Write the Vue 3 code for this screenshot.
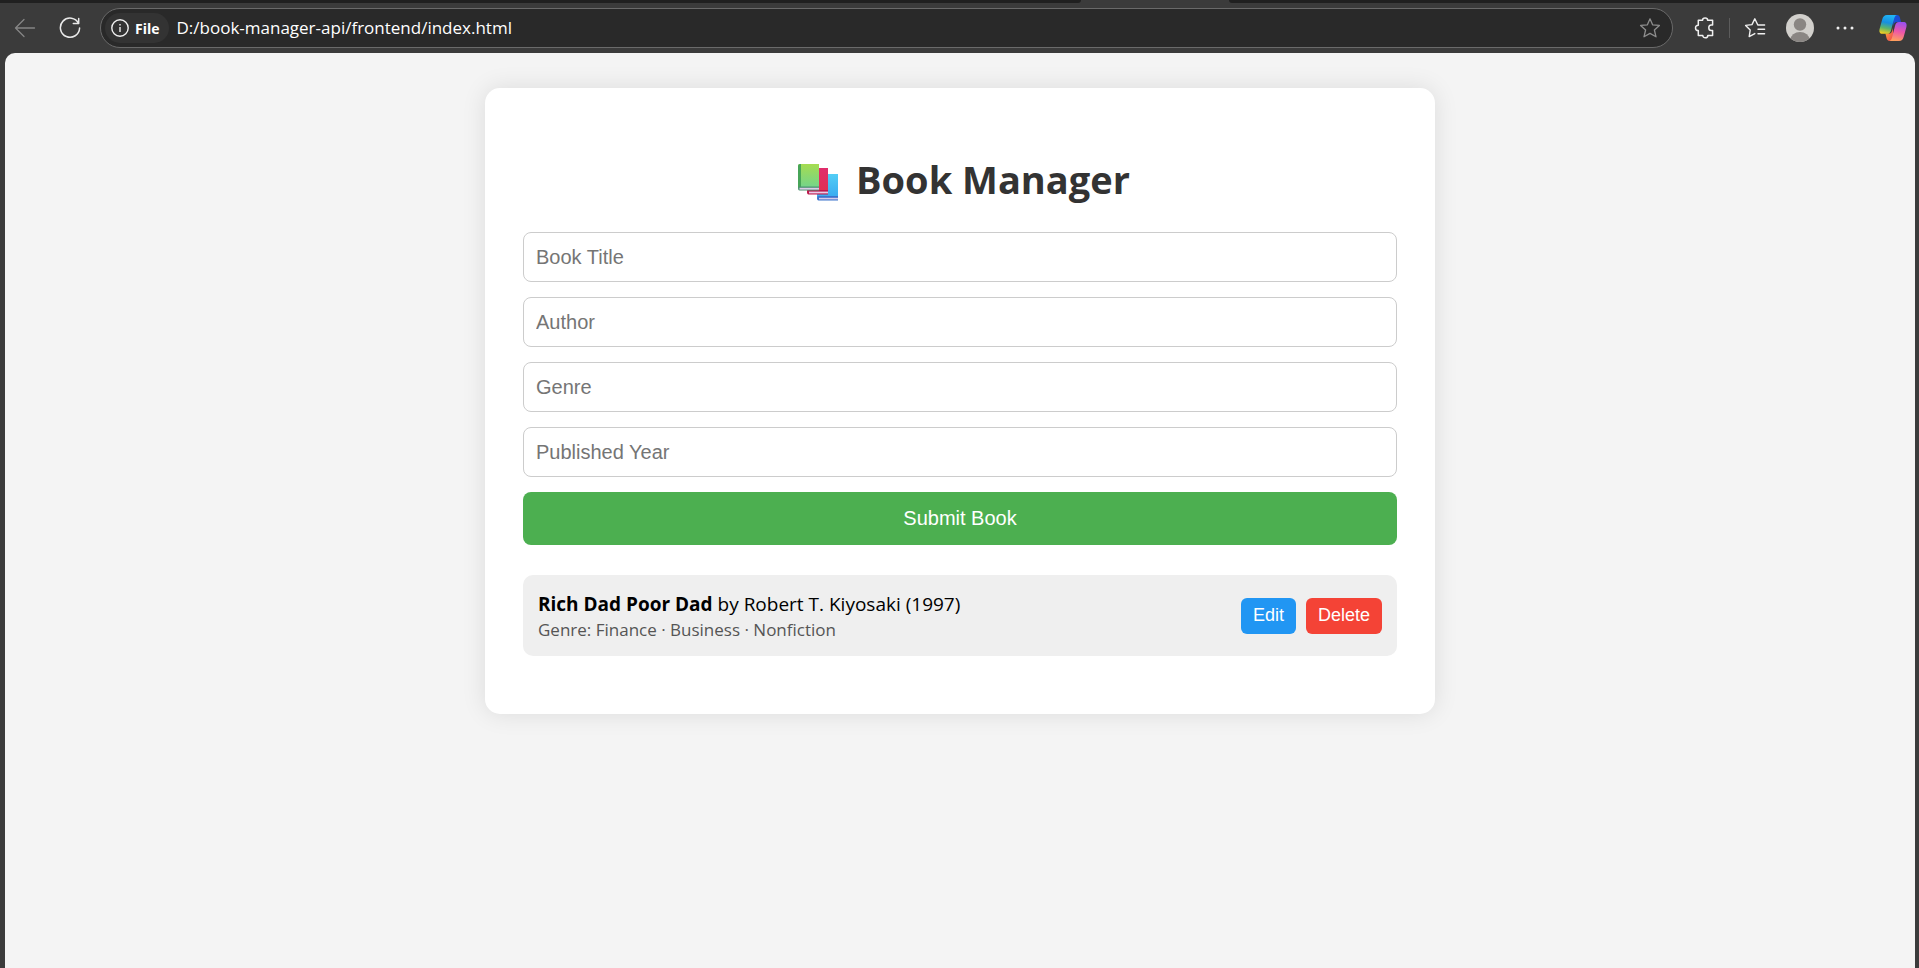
<script setup>
import { ref } from 'vue'

const address = ref('D:/book-manager-api/frontend/index.html')

const fields = [
  { id: 'title', label: 'Book Title' },
  { id: 'author', label: 'Author' },
  { id: 'genre', label: 'Genre' },
  { id: 'year', label: 'Published Year' },
]

const form = ref({ title: '', author: '', genre: '', year: '' })

const books = [
  {
    id: 1,
    title: 'Rich Dad Poor Dad',
    author: 'Robert T. Kiyosaki',
    year: 1997,
    genre: 'Finance · Business · Nonfiction',
  },
]
</script>

<template>
  <div class="browser">
    <div class="tab-strip">
      <span class="tab-side left"></span>
      <span class="tab-side right"></span>
    </div>
    <header class="toolbar">
      <button class="tool back" type="button" aria-label="Back">
        <svg width="22" height="20" viewBox="0 0 22 20" fill="none" stroke="#858585" stroke-width="1.3" stroke-linecap="round" stroke-linejoin="round">
          <path d="M20.5 10H1.5M10 1.5L1.5 10L10 18.5" />
        </svg>
      </button>
      <button class="tool reload" type="button" aria-label="Refresh">
        <svg width="22" height="22" viewBox="0 0 22 22" fill="none" stroke="#e8e8e8" stroke-width="1.5" stroke-linecap="round" stroke-linejoin="round">
          <path d="M19.6 6.4A9.6 9.6 0 1 0 20.6 11M19.7 1.6V6.6H14.3" />
        </svg>
      </button>
      <div class="address">
        <button class="scheme" type="button">
          <svg width="18" height="18" viewBox="0 0 18 18" fill="none" stroke="#f0f0f0" stroke-width="1.4">
            <circle cx="9" cy="9" r="8.2" />
            <path d="M9 8V13" />
            <path d="M9 5V6.5" />
          </svg>
          <span>File</span>
        </button>
        <input v-model="address" class="url" type="text" aria-label="Address" spellcheck="false" />
        <button class="tool star" type="button" aria-label="Add to favorites">
          <svg width="22" height="22" viewBox="0 0 22 22" fill="none" stroke="#8e8e8e" stroke-width="1.3" stroke-linejoin="round">
            <path d="M11 1.8L13.6 7.8L20.4 8.4L15.4 13L17 19.8L11 16.4L5 19.8L6.6 13L1.6 8.4L8.4 7.8Z" />
          </svg>
        </button>
      </div>
      <div class="actions">
        <button class="tool" type="button" aria-label="Extensions">
          <svg width="22" height="22" viewBox="0 0 22 22" fill="none" stroke="#f0f0f0" stroke-width="1.5" stroke-linejoin="round">
            <path d="M4.3 3.2H8.6C8.6 0.4 13.6 0.4 13.6 3.2H18.6V8H17.2C14 8 14 13.6 17.2 13.6H18.6V18.4H13.8C13.8 21.6 8.8 21.6 8.8 18.4H4.3V13.6C0.6 13.6 0.6 8.2 4.3 8.2Z" />
          </svg>
        </button>
        <span class="divider"></span>
        <button class="tool" type="button" aria-label="Favorites">
          <svg width="22" height="22" viewBox="0 0 22 22" fill="none" stroke="#f0f0f0" stroke-width="1.4" stroke-linecap="round" stroke-linejoin="round">
            <path d="M20.6 8H13.8L10.8 1.8L8 7.6L1.6 8.4L6.2 13L5.2 19.6L10.8 16.6M14 12.3H20.6M14 16.8H20.6" />
          </svg>
        </button>
        <button class="tool avatar" type="button" aria-label="Profile">
          <svg width="28" height="28" viewBox="0 0 28 28">
            <defs>
              <clipPath id="avatar-clip"><circle cx="14" cy="14" r="14" /></clipPath>
            </defs>
            <g clip-path="url(#avatar-clip)">
              <rect width="28" height="28" fill="#d2d0cc" />
              <circle cx="14" cy="10.5" r="6.2" fill="#8a8683" />
              <ellipse cx="14" cy="26" rx="9.6" ry="8" fill="#8a8683" />
            </g>
          </svg>
        </button>
        <button class="tool" type="button" aria-label="Settings and more">
          <svg width="18" height="4" viewBox="0 0 18 4" fill="#f0f0f0">
            <circle cx="2" cy="2" r="1.5" />
            <circle cx="9" cy="2" r="1.5" />
            <circle cx="16" cy="2" r="1.5" />
          </svg>
        </button>
        <button class="tool copilot" type="button" aria-label="Copilot">
          <svg width="28" height="28" viewBox="0 0 28 28">
            <defs>
              <linearGradient id="cp-left" x1="0.5" y1="0" x2="0.3" y2="1">
                <stop offset="0" stop-color="#20b4f5" />
                <stop offset="0.4" stop-color="#168fe0" />
                <stop offset="0.7" stop-color="#5cb56a" />
                <stop offset="1" stop-color="#f5d020" />
              </linearGradient>
              <linearGradient id="cp-right" x1="0.6" y1="0" x2="0.4" y2="1">
                <stop offset="0" stop-color="#9a50ee" />
                <stop offset="0.5" stop-color="#ee56a8" />
                <stop offset="1" stop-color="#ffa05c" />
              </linearGradient>
              <linearGradient id="cp-top" x1="0" y1="0" x2="1" y2="1">
                <stop offset="0" stop-color="#1550d8" />
                <stop offset="1" stop-color="#2348cf" />
              </linearGradient>
              <linearGradient id="cp-bottom" x1="0" y1="0" x2="1" y2="1">
                <stop offset="0" stop-color="#ffb03a" />
                <stop offset="1" stop-color="#ee4050" />
              </linearGradient>
            </defs>
            <path d="M14 1H18C20 1 20.6 2.4 21 4L22 8H18C15.6 8 15 9.6 14.4 12Z" fill="url(#cp-top)" />
            <path d="M14 27H11C8.6 27 8 25.4 7.4 23.4L6.4 19.6H10C12.6 19.6 13 17.6 14 14Z" fill="url(#cp-bottom)" />
            <path d="M8 1H18C16 1.4 15.4 3.6 14.8 6L12 16.4C11.4 18.6 10.2 19.8 8 19.8H3.4C0.6 19.8 0 17.6 0.6 15L3.2 5.4C4 2.6 5.4 1 8 1Z" fill="url(#cp-left)" />
            <path d="M20 27H10.6C12.2 26.4 12.8 24.4 13.4 22L16 12C16.6 9.4 17.8 8 20 8H24.6C27.4 8 28 10.2 27.4 13L24.8 22.4C24 25.4 22.6 27 20 27Z" fill="url(#cp-right)" />
          </svg>
        </button>
      </div>
    </header>

    <div class="viewport">
      <main class="card">
        <h1>
          <svg class="books-icon" width="56" height="44" viewBox="0 -2 56 44" role="img" aria-label="Books">
            <defs>
              <linearGradient id="book-green" x1="0" y1="0" x2="0" y2="1">
                <stop offset="0" stop-color="#a5dc50" />
                <stop offset="1" stop-color="#72d48c" />
              </linearGradient>
              <linearGradient id="book-red" x1="0" y1="0" x2="0" y2="1">
                <stop offset="0" stop-color="#e02c6c" />
                <stop offset="1" stop-color="#e03050" />
              </linearGradient>
              <linearGradient id="book-blue" x1="0" y1="0" x2="0" y2="1">
                <stop offset="0" stop-color="#52cdf5" />
                <stop offset="1" stop-color="#38a8f0" />
              </linearGradient>
            </defs>
            <g transform="translate(0 2)">
              <path d="M29 12H48V37H29Q27 37 27 35V14Q27 12 29 12Z" fill="url(#book-blue)" />
              <path d="M28.5 34H48V38.5H28.5Q27 38.5 27 36.2Q27 34 28.5 34Z" fill="#3d74cc" />
              <path d="M29 35.8H48V37.4H29Z" fill="#d8ccec" />
              <path d="M19 6H38V30H17V8Q17 6 19 6Z" fill="url(#book-red)" />
              <path d="M18.5 28H38V32.4H18.5Q17 32.4 17 30.2Q17 28 18.5 28Z" fill="#bd184c" />
              <path d="M19 29.6H38V31.4H19Z" fill="#e8cce8" />
              <path d="M10 2H29V26H8V4Q8 2 10 2Z" fill="url(#book-green)" />
              <path d="M10 2H11V26H8V4Q8 2 10 2Z" fill="#47a558" />
              <path d="M9.5 24.4H29V28.6H9.5Q8 28.6 8 26.5Q8 24.4 9.5 24.4Z" fill="#4d9272" />
              <path d="M9.5 25.8H29V27.6H9.5Z" fill="#dccce8" />
            </g>
          </svg>
          <span>Book Manager</span>
        </h1>

        <form class="book-form" @submit.prevent>
          <input
            v-for="field in fields"
            :id="field.id"
            :key="field.id"
            v-model="form[field.id]"
            type="text"
            :placeholder="field.label"
            :aria-label="field.label"
          />
          <button class="submit" type="submit">Submit Book</button>
        </form>

        <ul class="book-list">
          <li v-for="book in books" :key="book.id">
            <div class="info">
              <div class="headline"><strong>{{ book.title }}</strong> by {{ book.author }} ({{ book.year }})</div>
              <div class="genre">Genre: {{ book.genre }}</div>
            </div>
            <div class="row-actions">
              <button class="edit" type="button">Edit</button>
              <button class="delete" type="button">Delete</button>
            </div>
          </li>
        </ul>
      </main>
    </div>
  </div>
</template>

<style>
body {
  margin: 0;
  background: #3b3b3b;
}
</style>

<style scoped>
* {
  box-sizing: border-box;
}

.browser {
  display: flex;
  flex-direction: column;
  min-height: 100vh;
  background: #3b3b3b;
  font-family: "Open Sans", "Noto Sans", sans-serif;
}

button {
  border: 0;
  margin: 0;
  padding: 0;
  cursor: pointer;
}

.tab-strip {
  display: grid;
  grid-template-columns: 1081fr 148px 690fr;
  height: 3px;
}

.tab-side {
  background: #202020;
}

.tab-side.left {
  border-bottom-right-radius: 4px;
}

.tab-side.right {
  grid-column: 3;
  border-bottom-left-radius: 4px;
}

.toolbar {
  display: flex;
  align-items: center;
  height: 50px;
  padding: 0 12px 0 14px;
}

.tool {
  display: flex;
  align-items: center;
  justify-content: center;
  background: none;
}

.reload {
  margin: 0 19px 0 23px;
}

.address {
  display: flex;
  flex: 1;
  align-items: center;
  height: 40px;
  padding: 0 11px 0 4px;
  border: 1px solid #6a6a6a;
  border-radius: 20px;
  background: #292929;
}

.scheme {
  display: flex;
  align-items: center;
  gap: 6px;
  height: 30px;
  padding: 0 9px 0 6px;
  border-radius: 15px;
  background: #333333;
  color: #ffffff;
  font-family: inherit;
  font-size: 14px;
  font-weight: 700;
}

.url {
  flex: 1;
  min-width: 0;
  margin-left: 8px;
  padding: 0 0 2px;
  border: 0;
  outline: 0;
  background: none;
  color: #ffffff;
  font-family: inherit;
  font-size: 17px;
}

.actions {
  display: flex;
  align-items: center;
  margin-left: 21px;
}

.divider {
  width: 1px;
  height: 20px;
  margin: 0 14px 0 13px;
  background: #5c5c5c;
}

.avatar {
  margin: 0 22px 0 20px;
}

.copilot {
  margin-left: 25px;
}

.viewport {
  flex: 1;
  margin: 0 4px 0 5px;
  padding: 35px 20px;
  border-radius: 10px 10px 0 0;
  background: #f4f4f4;
}

.card {
  max-width: 950px;
  margin: 0 auto;
  padding: 38px;
  border-radius: 15px;
  background: #ffffff;
  box-shadow: 0 0 25px rgba(0, 0, 0, 0.1);
}

h1 {
  display: flex;
  align-items: center;
  justify-content: center;
  gap: 10px;
  margin: 27px 0 26px;
  color: #333333;
  font-size: 38px;
  font-weight: 700;
  line-height: 53px;
}

.book-form {
  display: flex;
  flex-direction: column;
  gap: 15px;
}

.book-form input {
  width: 100%;
  height: 50px;
  padding: 0 12px;
  border: 1px solid #cccccc;
  border-radius: 8px;
  outline: 0;
  background: #ffffff;
  font-family: "Liberation Sans", Arial, sans-serif;
  font-size: 20px;
}

.book-form input::placeholder {
  color: #757575;
  opacity: 1;
}

.submit {
  height: 53px;
  border-radius: 8px;
  background: #4caf50;
  color: #ffffff;
  font-family: "Liberation Sans", Arial, sans-serif;
  font-size: 20px;
}

.book-list {
  margin: 30px 0 20px;
  padding: 0;
  list-style: none;
}

.book-list li {
  display: flex;
  align-items: center;
  justify-content: space-between;
  padding: 15px;
  border-radius: 10px;
  background: #efefef;
}

.headline {
  color: #000000;
  font-size: 19px;
  line-height: 29px;
}

.genre {
  color: #555555;
  font-size: 17px;
  line-height: 22px;
}

.row-actions {
  display: flex;
  gap: 10px;
}

.row-actions button {
  height: 36px;
  padding: 0 12px;
  border-radius: 6px;
  color: #ffffff;
  font-family: "Liberation Sans", Arial, sans-serif;
  font-size: 18px;
}

.row-actions .edit {
  background: #2196f3;
}

.row-actions .delete {
  background: #f44336;
}
</style>
